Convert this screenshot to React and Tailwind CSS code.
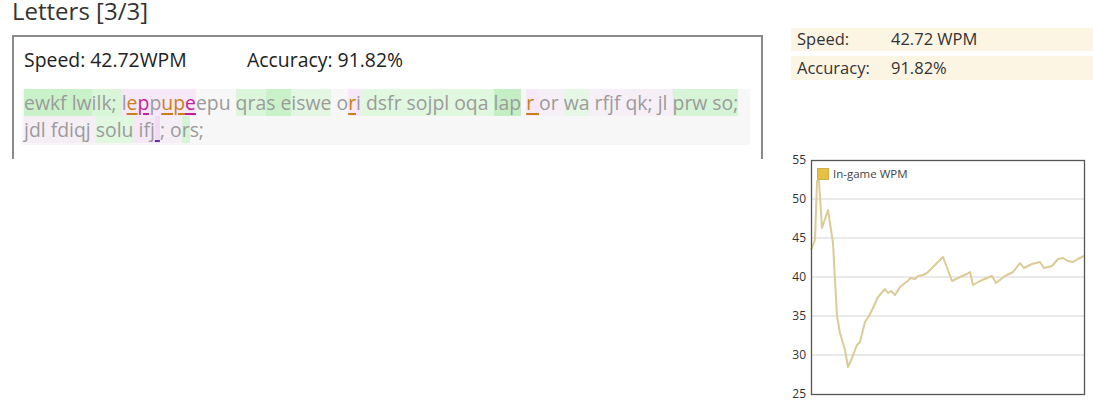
import React from 'react';

const FONT = { fontFamily: '"Open Sans", "Noto Sans", "DejaVu Sans", sans-serif' };

// typed text, one entry per highlighted run
const line1 = [
  { t: 'ewkf lw', bg: 'bg-[#c9f2c9]' },
  { t: 'ilk; ', bg: 'bg-[#d9f6d9]' },
  { t: 'l', bg: 'bg-[#f6e8f6]' },
  { t: 'e', bg: 'bg-[#f6e8f6]', err: 'text-[#c8801c] underline' },
  { t: 'p', bg: 'bg-[#f6e8f6]', err: 'text-[#c21f9b] underline' },
  { t: 'p', bg: 'bg-[#f6e8f6]' },
  { t: 'u', bg: 'bg-[#f6e8f6]', err: 'text-[#c8801c] underline' },
  { t: 'p', bg: 'bg-[#f6e8f6]', err: 'text-[#c8801c] underline' },
  { t: 'e', bg: 'bg-[#f6e8f6]', err: 'text-[#c21f9b] underline' },
  { t: 'epu ', bg: '' },
  { t: 'qra', bg: 'bg-[#dcf6dc]' },
  { t: 's e', bg: 'bg-[#c9f2c9]' },
  { t: 'iswe', bg: 'bg-[#e3f7e3]' },
  { t: ' o', bg: '' },
  { t: 'r', bg: 'bg-[#f6e8f6]', err: 'text-[#c8801c] underline' },
  { t: 'i', bg: 'bg-[#f6e8f6]' },
  { t: ' dsfr sojpl oqa ', bg: 'bg-[#e0f7e0]' },
  { t: 'lap', bg: 'bg-[#c4efc4]' },
  { t: ' ', bg: '' },
  { t: 'r ', bg: 'bg-[#f6e8f6]', err: 'text-[#c8801c] underline' },
  { t: 'or ', bg: 'bg-[#f7eff7]' },
  { t: 'wa', bg: 'bg-[#e6f7e6]' },
  { t: ' rfjf qk; jl ', bg: 'bg-[#f7eff7]' },
  { t: 'prw so;', bg: 'bg-[#d6f5d6]' },
];

const line2 = [
  { t: 'jdl fdiqj ', bg: 'bg-[#f5eff5]' },
  { t: 'solu', bg: 'bg-[#e0f7e0]' },
  { t: ' ifj', bg: 'bg-[#f6e8f6]' },
  { t: ' ', bg: 'bg-[#eedcf2]', err: 'text-[#6a2ca8] underline' },
  { t: '; o', bg: 'bg-[#f6eef6]' },
  { t: 'r', bg: 'bg-[#d6f5d6]' },
  { t: 's;', bg: '' },
];

const wpm = [
  [20, 100], [24, 90], [26, 31], [28, 31], [31, 78], [37, 60], [42, 93], [44, 130],
  [46, 166], [49, 183], [54, 200], [57, 217], [61, 208], [64, 200], [66, 195], [69, 192],
  [74, 172], [78, 166], [81, 160], [87, 147], [94, 139], [97, 143], [100, 141], [104, 145],
  [109, 137], [114, 133], [117, 131], [119, 128], [124, 129], [127, 126], [132, 125],
  [136, 123], [139, 120], [146, 113], [152, 107], [161, 131], [169, 127], [176, 124],
  [179, 122], [182, 135], [189, 131], [196, 128], [201, 126], [205, 133], [214, 126],
  [222, 122], [229, 113], [233, 118], [241, 114], [249, 112], [253, 118], [261, 116],
  [267, 109], [272, 108], [277, 111], [282, 112], [287, 109], [293, 106],
];

const TypedLine = ({ parts }) => (
  <div className="whitespace-pre leading-[27px]">
    {parts.map((p, i) => (
      <span key={i} className={`${p.bg} ${p.err ? p.err + ' underline-offset-[3px] decoration-2' : ''}`}>
        {p.t}
      </span>
    ))}
  </div>
);

const WpmChart = () => {
  const grid = [55, 50, 45, 40, 35, 30, 25];
  const pts = wpm.map(([x, y]) => `${x},${y}`).join(' ');
  return (
    <svg width="302" height="259" viewBox="0 0 302 259" className="mt-[70px] block">
      {grid.map((v, i) => (
        <g key={v}>
          {i > 0 && i < 6 && <line x1="20" x2="293" y1={10 + i * 39} y2={10 + i * 39} stroke="#d4d4d4" strokeWidth="1" />}
          <text x="15" y={14 + i * 39} textAnchor="end" fontSize="12" fill="#333" fontFamily="Open Sans, sans-serif">{v}</text>
        </g>
      ))}
      <polyline points={pts} fill="none" stroke="#dccb94" strokeWidth="2" strokeLinejoin="round" />
      <rect x="20.5" y="10.5" width="273" height="234" fill="none" stroke="#555" strokeWidth="1.3" />
      <rect x="26.5" y="18.5" width="11" height="11" fill="#e8c142" stroke="#cfae52" strokeWidth="1" />
      <text x="42" y="28" fontSize="11.5" fill="#444" fontFamily="Open Sans, sans-serif">In-game WPM</text>
    </svg>
  );
};

const App = () => {
  return (
    <div className="flex bg-white w-[1093px] h-[409px] overflow-hidden" style={FONT}>
      {/* left: game result */}
      <div className="ml-[12px] w-[751px]">
        <h2 className="mb-[13px] text-[24px] leading-[22px] text-[#333]">Letters [3/3]</h2>
        <div className="h-[124px] border-2 border-b-0 border-[#8a8a8a] pl-[8px] pr-[11px] pt-[11px]">
          <div className="flex text-[19.4px] leading-[24px] text-[#222]">
            <span className="w-[225px] pl-[2px]">Speed: 42.72WPM</span>
            <span>Accuracy: 91.82%</span>
          </div>
          <div className="mt-[17px] bg-[#f7f7f7] pl-[2px] pb-[2px] text-[19.4px] text-[#9b9b9b]">
            <TypedLine parts={line1} />
            <TypedLine parts={line2} />
          </div>
        </div>
      </div>

      {/* right: stats + chart */}
      <div className="ml-[28px] w-[302px] pt-[28px]">
        <div className="flex flex-col gap-[5px] text-[16.5px] text-[#333]">
          <div className="flex items-center h-[23px] bg-[#fcf5e3] pl-[6px]">
            <span className="w-[94px]">Speed:</span>
            <span>42.72 WPM</span>
          </div>
          <div className="flex items-center h-[24px] bg-[#fcf5e3] pl-[6px]">
            <span className="w-[94px]">Accuracy:</span>
            <span>91.82%</span>
          </div>
        </div>
        <WpmChart />
      </div>
    </div>
  );
};

export default App;
